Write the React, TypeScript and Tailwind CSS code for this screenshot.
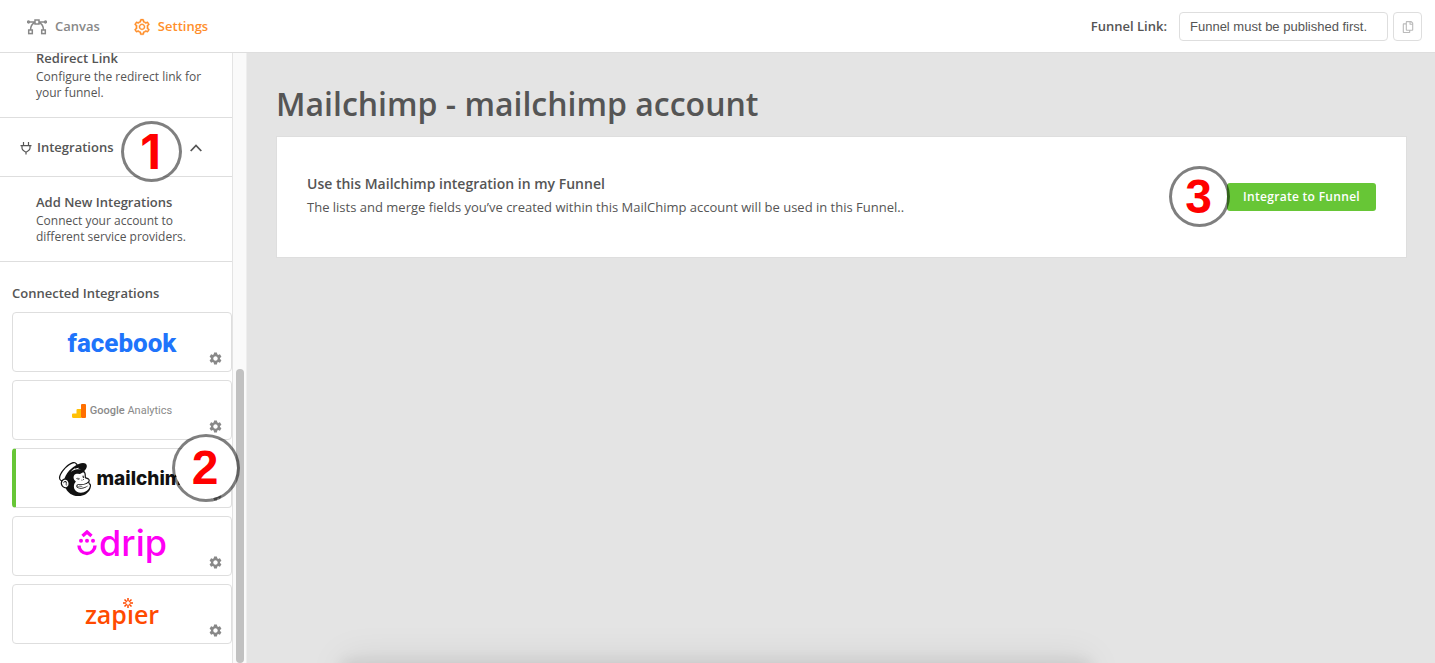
import type { ReactNode } from "react";
import { AiOutlineSetting } from "react-icons/ai";
import { FaRegCopy } from "react-icons/fa";
import { MdSettings } from "react-icons/md";
import { SiMailchimp } from "react-icons/si";

const integrations: { name: string; logo: ReactNode; active?: boolean; step?: string }[] = [
    { name: "Facebook", logo: <FacebookLogo /> },
    { name: "Google Analytics", logo: <GoogleAnalyticsLogo /> },
    { name: "Mailchimp", logo: <MailchimpLogo />, active: true, step: "2" },
    { name: "Drip", logo: <DripLogo /> },
    { name: "Zapier", logo: <ZapierLogo /> },
];

function FacebookLogo() {
    return (
        <span className="pt-0.5 font-['Roboto',sans-serif] text-[26px] leading-8 font-extrabold text-[#1f74fb]">
            facebook
        </span>
    );
}

function GoogleAnalyticsLogo() {
    return (
        <span className="flex items-center gap-1 pt-0.5 font-['Roboto',sans-serif] text-[11px] leading-4 text-[#8a8a8a]">
            <svg viewBox="0 0 14 14" className="size-3.5" aria-hidden="true">
                <path d="M0 10.500a1 1 0 0 1 1-1h4V14H1.500A1.500 1.500 0 0 1 0 12.500Z" fill="#ffc107" />
                <path d="M4.500 6a1 1 0 0 1 1-1H9v9H4.500Z" fill="#ffc107" />
                <rect x="9" width="5" height="14" rx="1" fill="#ff6f00" />
            </svg>
            <span>
                <span className="font-medium">Google</span> Analytics
            </span>
        </span>
    );
}

function MailchimpLogo() {
    return (
        <span className="flex items-center gap-1 pt-0.5 pl-1.5 font-['Inter',sans-serif] text-[19px] leading-6 font-extrabold text-[#111]">
            <SiMailchimp className="size-[34px]" aria-hidden="true" />
            mailchimp
        </span>
    );
}

function DripLogo() {
    return (
        <span className="flex items-center gap-0.5 pb-1.5 font-['Inter',sans-serif] text-[36px] leading-8 font-medium text-[#ff00f5]">
            <svg viewBox="0 0 20 26" className="h-[26px] w-5" fill="none" stroke="currentColor" strokeWidth="3.400" aria-hidden="true">
                <path d="M5.500 6 10 2l4.500 4" />
                <path d="M2 15.500a8 8 0 0 0 16 0" />
                <g fill="currentColor" stroke="none">
                    <circle cx="4" cy="10.800" r="2" />
                    <circle cx="10" cy="10.800" r="2" />
                    <circle cx="16" cy="10.800" r="2" />
                </g>
            </svg>
            drip
        </span>
    );
}

function ZapierLogo() {
    return (
        <span className="relative font-['Open_Sans',sans-serif] text-[25px] leading-8 font-semibold text-[#ff4a00]">
            zap&#305;er
            <svg viewBox="0 0 10 10" className="absolute top-0 left-[38px] size-2.5" stroke="currentColor" strokeWidth="1.500" fill="none" aria-hidden="true">
                <path d="M5 0v3.300M5 6.700V10M0 5h3.300M6.700 5H10M1.500 1.500l2.300 2.300M6.200 6.200l2.300 2.300M8.500 1.500 6.200 3.800M3.800 6.200 1.500 8.500" />
            </svg>
        </span>
    );
}

function CanvasIcon() {
    return (
        <svg viewBox="0 0 20 16" className="h-4 w-5" fill="none" stroke="currentColor" strokeWidth="1.500" aria-hidden="true">
            <rect x="8" y="1" width="4" height="4" />
            <rect x="1.700" y="11" width="3.600" height="3.600" />
            <rect x="14.700" y="11" width="3.600" height="3.600" />
            <circle cx="1.500" cy="3" r="0.900" />
            <circle cx="18.500" cy="3" r="0.900" />
            <path d="M2.400 3H8M12 3h5.600M8 3.500C5 4.700 3.600 7 3.500 11M12 3.500c3 1.200 4.400 3.500 4.500 7.500" />
        </svg>
    );
}

function PlugIcon() {
    return (
        <svg viewBox="0 0 12 14" className="h-3.5 w-3" fill="none" stroke="currentColor" strokeWidth="1.200" aria-hidden="true">
            <path d="M3.500 1v3.500M8.500 1v3.500M.500 4.700h11M2 4.700V7c0 2 1.700 3 4 4.200C8.300 10 10 9 10 7V4.700M6 11v2.500" />
        </svg>
    );
}

function Step({ n, className }: { n: string; className: string }) {
    return (
        <span
            className={`absolute z-10 flex items-center justify-center rounded-full border-[3px] border-black/50 bg-white bg-clip-padding pr-0.5 text-5xl font-bold text-[#ff0000] ${className}`}
        >
            {n}
        </span>
    );
}

function MenuItem({ title, text }: { title: string; text: string }) {
    return (
        <a href="#" className="block border-b border-[#dedede] py-4 pr-6 pl-9">
            <h3 className="mb-0.5 text-[13px] leading-[18px] font-semibold">{title}</h3>
            <p className="text-xs leading-4">{text}</p>
        </a>
    );
}

export default function App() {
    return (
        <div className="flex h-screen flex-col overflow-hidden bg-[#e4e4e4] font-['Open_Sans',sans-serif] text-[#555]">
            <header className="z-20 flex shrink-0 items-center justify-between border-b border-[#dedede] bg-white pt-3 pr-[13px] pb-[11px] pl-[27px] text-[13px] font-semibold">
                <nav className="flex items-center gap-[33px]">
                    <a href="#" className="flex items-center gap-2 text-[#888]">
                        <CanvasIcon />
                        Canvas
                    </a>
                    <a href="#" className="flex items-center gap-[7px] text-[#ff8f2b]">
                        <AiOutlineSetting className="size-[18px]" stroke="currentColor" strokeWidth="20" aria-hidden="true" />
                        Settings
                    </a>
                </nav>
                <div className="flex items-center">
                    <label htmlFor="funnel-link" className="mr-3">
                        Funnel Link:
                    </label>
                    <input
                        id="funnel-link"
                        readOnly
                        value="Funnel must be published first."
                        className="h-[29px] w-[209px] rounded border border-[#dedede] px-2.5 font-['Liberation_Sans',Arial,sans-serif] text-[13px] font-normal"
                    />
                    <button
                        aria-label="Copy funnel link"
                        className="ml-[5px] flex size-[29px] items-center justify-center rounded border border-[#dedede] text-[#bbb]"
                    >
                        <FaRegCopy className="size-3" aria-hidden="true" />
                    </button>
                </div>
            </header>

            <div className="flex min-h-0 flex-1">
                <aside className="flex w-[247px] shrink-0 overflow-hidden bg-white">
                    <div className="flex w-[233px] shrink-0 flex-col justify-end border-r border-[#e4e4e4] pb-[19px]">
                        <MenuItem title="Redirect Link" text="Configure the redirect link for your funnel." />
                        <div className="relative border-b border-[#dedede]">
                            <button className="flex h-[58px] w-full items-center pt-0.5 pl-5 text-[13px] font-semibold">
                                <PlugIcon />
                                <span className="ml-[5px]">Integrations</span>
                                <svg viewBox="0 0 12 8" className="mr-[30px] ml-auto h-2 w-3" fill="none" stroke="currentColor" strokeWidth="1.800" aria-hidden="true">
                                    <path d="m.700 7 5.300-5.500L11.300 7" />
                                </svg>
                            </button>
                            <Step n="1" className="top-[3px] left-[121px] size-[61px] font-['Inter',sans-serif]" />
                        </div>
                        <MenuItem title="Add New Integrations" text="Connect your account to different service providers." />

                        <h2 className="mt-[21px] mb-[9px] ml-3 text-[13px] leading-5 font-semibold">
                            Connected Integrations
                        </h2>
                        <ul className="flex flex-col gap-2 pl-3">
                            {integrations.map((item) => (
                                <li
                                    key={item.name}
                                    className={`relative flex h-[60px] items-center justify-center rounded border border-[#dedede] ${item.active ? "border-l-4 border-l-[#67c636]" : ""}`}
                                >
                                    {item.logo}
                                    <button aria-label={`${item.name} settings`} className="absolute right-2 bottom-[5px] text-[#888]">
                                        <MdSettings className="size-[15px]" aria-hidden="true" />
                                    </button>
                                    {item.step && (
                                        <Step
                                            n={item.step}
                                            className="-top-[15px] -right-[9px] size-[68px] font-['Liberation_Sans',Arial,sans-serif]"
                                        />
                                    )}
                                </li>
                            ))}
                        </ul>
                    </div>
                    <div className="flex flex-1 flex-col justify-end border-r border-[#eee] bg-[#fafafa] pl-[3px]">
                        <div className="h-[48.2%] w-2 rounded-full bg-[#c1c1c1]" />
                    </div>
                </aside>

                <main className="relative min-w-0 flex-1 overflow-hidden pt-7 pr-7 pl-[29px]">
                    <h1 className="text-[32px] leading-[46px] font-semibold">Mailchimp - mailchimp account</h1>
                    <section className="mt-[9px] flex items-center justify-between border border-[#dedede] bg-white px-[30px] py-[35px]">
                        <div className="pb-1">
                            <h2 className="text-sm leading-6 font-semibold">Use this Mailchimp integration in my Funnel</h2>
                            <p className="text-[13px] leading-[22px]">
                                The lists and merge fields you’ve created within this MailChimp account will be used in this Funnel..
                            </p>
                        </div>
                        <div className="relative">
                            <button className="block h-7 rounded-[3px] bg-[#67c636] px-4 text-xs font-semibold tracking-wide text-white">
                                Integrate to Funnel
                            </button>
                            <Step
                                n="3"
                                className="-top-[17px] -left-[58px] size-[61px] font-['Liberation_Sans',Arial,sans-serif]"
                            />
                        </div>
                    </section>
                    <div className="absolute top-full right-[29%] left-[8%] h-10 shadow-[0_-2px_14px_rgba(0,0,0,0.08),0_-6px_36px_rgba(0,0,0,0.08)]" />
                </main>
            </div>
        </div>
    );
}
